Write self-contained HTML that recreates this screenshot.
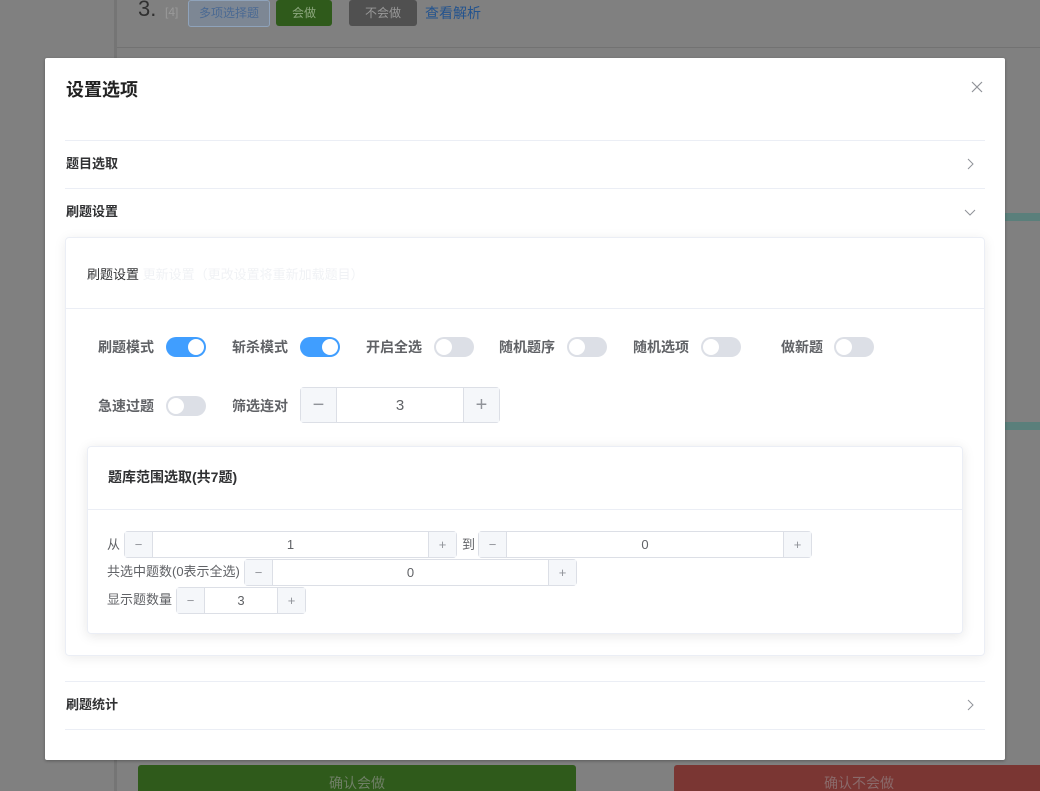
<!DOCTYPE html>
<html><head><meta charset="utf-8"><style>
*{box-sizing:border-box;margin:0;padding:0}
html,body{width:1040px;height:791px;overflow:hidden}
body{background:#808080;font-family:"Liberation Sans","Noto Sans CJK SC",sans-serif;position:relative;color:#303133}
.a{position:absolute}
.sw{position:absolute;width:40px;height:20px;border-radius:10px;background:#dcdfe6}
.sw::after{content:"";position:absolute;top:2px;left:2px;width:16px;height:16px;border-radius:50%;background:#fff}
.sw.on{background:#409eff}.sw.on::after{left:22px}
.lb{position:absolute;font-size:14px;font-weight:bold;color:#606266;line-height:20px}
.num{position:absolute;border:1px solid #dcdfe6;border-radius:4px;background:#fff;display:flex;font-size:13px;color:#606266}
.num .b{background:#f5f7fa;color:#909399;display:flex;align-items:center;justify-content:center}
.num .b.l{border-right:1px solid #dcdfe6}.num .b.r{border-left:1px solid #dcdfe6}
.num .v{flex:1;display:flex;align-items:center;justify-content:center}
.sl{position:absolute;font-size:13px;color:#606266;line-height:20px}
.hr{position:absolute;left:65px;width:920px;height:1px;background:#ebeef5}
.ch{position:absolute;font-size:13px;font-weight:bold;color:#303133}
</style></head><body>
<div class="a" style="left:114px;top:0;width:3px;height:791px;background:#757575"></div>
<div class="a" style="left:117px;top:47px;width:923px;height:1px;background:#727272"></div>
<div class="a" style="left:138px;top:-4px;font-size:22px;color:#303030">3.</div>
<div class="a" style="left:165px;top:5px;font-size:12px;color:#999">[4]</div>
<div class="a" style="left:188px;top:0;width:82px;height:27px;border:1px solid #8fa3bb;border-radius:3px;background:#7d8794;color:#4b6a93;font-size:12px;line-height:25px;text-align:center">多项选择题</div>
<div class="a" style="left:276px;top:0;width:56px;height:26px;background:#2f5a1b;border-radius:3px;color:#8ea87f;font-size:12px;line-height:26px;text-align:center">会做</div>
<div class="a" style="left:349px;top:0;width:68px;height:26px;background:#505050;border-radius:3px;color:#999;font-size:12px;line-height:26px;text-align:center">不会做</div>
<div class="a" style="left:425px;top:3px;font-size:14px;color:#23538e">查看解析</div>
<div class="a" style="left:1005px;top:213px;width:35px;height:8px;background:#5a7f7b"></div>
<div class="a" style="left:1005px;top:422px;width:35px;height:8px;background:#5a7f7b"></div>
<div class="a" style="left:138px;top:765px;width:438px;height:30px;background:#2f5a1b;border-radius:3px;color:#6f7f66;font-size:14px;text-align:center;line-height:36px">确认会做</div>
<div class="a" style="left:674px;top:765px;width:370px;height:30px;background:#7a3633;border-radius:3px;color:#8a6a6a;font-size:14px;text-align:center;line-height:36px">确认不会做</div>

<div class="a" style="left:45px;top:58px;width:960px;height:702px;background:#fff;border-radius:2px;box-shadow:0 1px 3px rgba(0,0,0,.3)">
<div class="a" style="left:21px;top:18px;font-size:18px;font-weight:bold;color:#222">设置选项</div>
<svg class="a" style="left:926px;top:23px" width="12" height="12"><path d="M1 1L11 11M11 1L1 11" stroke="#909399" stroke-width="1.2"/></svg>
</div>
<div class="hr" style="top:140px"></div>
<div class="ch" style="left:66px;top:153px">题目选取</div>
<svg class="a" style="left:965px;top:157px" width="10" height="14"><path d="M3 2L8 7L3 12" stroke="#909399" fill="none"/></svg>
<div class="hr" style="top:188px"></div>
<div class="ch" style="left:66px;top:201px">刷题设置</div>
<svg class="a" style="left:963px;top:207px" width="14" height="10"><path d="M2 3L7 8L12 3" stroke="#909399" fill="none"/></svg>

<div class="a" style="left:65px;top:237px;width:920px;height:419px;border:1px solid #ebeef5;border-radius:4px;box-shadow:0 2px 12px rgba(0,0,0,.08)"></div>
<div class="a" style="left:66px;top:308px;width:918px;height:1px;background:#ebeef5"></div>
<div class="a" style="left:87px;top:264px;font-size:13px;color:#303133">刷题设置 <span style="color:#f0f2f5">更新设置（更改设置将重新加载题目）</span></div>

<div class="lb" style="left:98px;top:337px">刷题模式</div><div class="sw on" style="left:166px;top:337px"></div>
<div class="lb" style="left:232px;top:337px">斩杀模式</div><div class="sw on" style="left:300px;top:337px"></div>
<div class="lb" style="left:366px;top:337px">开启全选</div><div class="sw" style="left:434px;top:337px"></div>
<div class="lb" style="left:499px;top:337px">随机题序</div><div class="sw" style="left:567px;top:337px"></div>
<div class="lb" style="left:633px;top:337px">随机选项</div><div class="sw" style="left:701px;top:337px"></div>
<div class="lb" style="left:781px;top:337px">做新题</div><div class="sw" style="left:834px;top:337px"></div>
<div class="lb" style="left:98px;top:396px">急速过题</div><div class="sw" style="left:166px;top:396px"></div>
<div class="lb" style="left:232px;top:396px">筛选连对</div>
<div class="num" style="left:300px;top:387px;width:200px;height:36px;font-size:15px"><div class="b l" style="width:36px;font-size:20px">−</div><div class="v">3</div><div class="b r" style="width:36px;font-size:20px">+</div></div>

<div class="a" style="left:87px;top:446px;width:876px;height:188px;border:1px solid #ebeef5;border-radius:4px;box-shadow:0 2px 12px rgba(0,0,0,.1)"></div>
<div class="a" style="left:88px;top:509px;width:874px;height:1px;background:#ebeef5"></div>
<div class="a" style="left:108px;top:467px;font-size:14px;font-weight:bold;color:#303133">题库范围选取(共7题)</div>

<div class="sl" style="left:107px;top:535px">从</div>
<div class="num" style="left:124px;top:531px;width:333px;height:27px"><div class="b l" style="width:28px">−</div><div class="v">1</div><div class="b r" style="width:28px">+</div></div>
<div class="sl" style="left:462px;top:535px">到</div>
<div class="num" style="left:478px;top:531px;width:334px;height:27px"><div class="b l" style="width:28px">−</div><div class="v">0</div><div class="b r" style="width:28px">+</div></div>
<div class="sl" style="left:107px;top:562px">共选中题数(0表示全选)</div>
<div class="num" style="left:244px;top:559px;width:333px;height:27px"><div class="b l" style="width:28px">−</div><div class="v">0</div><div class="b r" style="width:28px">+</div></div>
<div class="sl" style="left:107px;top:590px">显示题数量</div>
<div class="num" style="left:176px;top:587px;width:130px;height:27px"><div class="b l" style="width:28px">−</div><div class="v">3</div><div class="b r" style="width:28px">+</div></div>

<div class="hr" style="top:681px"></div>
<div class="ch" style="left:66px;top:694px">刷题统计</div>
<svg class="a" style="left:965px;top:698px" width="10" height="14"><path d="M3 2L8 7L3 12" stroke="#909399" fill="none"/></svg>
<div class="hr" style="top:729px"></div>
</body></html>
